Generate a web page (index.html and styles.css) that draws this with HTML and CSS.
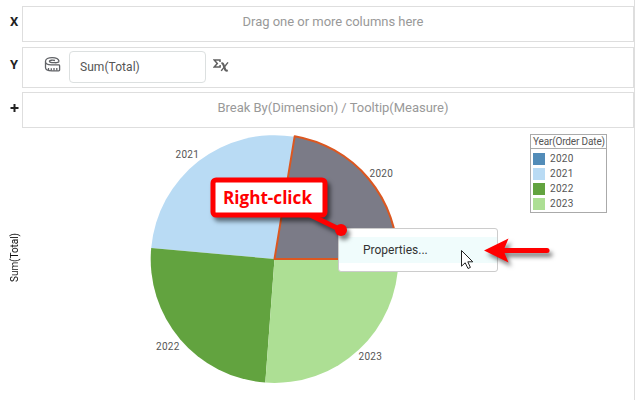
FILE: index.html
```html
<!DOCTYPE html>
<html lang="en">
<head>
<meta charset="utf-8">
<title>Chart editor</title>
<link rel="stylesheet" href="styles.css">
</head>
<body>
<main class="editor">
  <section class="shelves">
    <div class="shelf"><span class="axis">X</span><div class="drop"><span class="hint">Drag one or more columns here</span></div></div>
    <div class="shelf shelf-y"><span class="axis">Y</span><div class="drop fields">
      <svg class="measure" width="17" height="17" viewBox="0 0 17 17" aria-hidden="true">
        <path d="M15 5.2C14.5 2.8 12 1.6 8.2 1.6C4.3 1.6 1.5 3 1.5 5.2V11.5C1.5 13.8 4 14.8 8 14.8H14.8Q15.6 14.8 15.6 14V9.7Q15.6 8.9 14.8 8.9H7C3.5 8.9 1.5 7.6 1.5 5.4M15 5.2C15 6.4 13 6.9 10.5 6.7C7 6.8 5.2 6.1 5.4 5.1C5.6 4.3 8.5 3.8 11 4.5"/>
        <path d="M4.5 12V14.4M7.3 12.3V14.5M10 12V14.5M12.8 12V14.5"/>
      </svg>
      <div class="field">Sum(Total)</div>
      <svg class="aggregate" width="17" height="17" viewBox="0 0 17 17" aria-hidden="true">
        <path d="M7 4V1.9H1.2L4.3 5.4L1.2 9.1H7.1V7"/>
        <path class="thick" d="M8.4 5.6Q9.8 4.9 10.4 6.6L12.2 11.6Q12.8 13.2 14.8 12.4"/><path d="M15 4.4L8.2 12.9"/>
      </svg>
    </div></div>
    <div class="shelf"><span class="axis plus"><svg width="10" height="10" aria-hidden="true"><path d="M4.5 1V9M.5 5H8.5"/></svg></span><div class="drop"><span class="hint">Break By(Dimension) / Tooltip(Measure)</span></div></div>
  </section>
  <section class="chart">
    <div class="axis-title"><span>Sum(Total)</span></div>
    <svg class="pie" width="370" height="272" viewBox="80 128 370 272">
      <path fill="#b9dbf4" d="M274.5 259L151.2 248A123.8 123.8 0 0 1 294.7 136.8Z"/>
      <path fill="#62a33f" d="M274.5 259L265.3 382.6A123.8 123.8 0 0 1 151.2 248Z"/>
      <path fill="#addf94" d="M274.5 259H398.3A123.8 123.8 0 0 1 265.3 382.6Z"/>
      <path class="selected" d="M274.5 259L294.7 136.2A123.8 123.8 0 0 1 397.5 259Z"/>
      <g class="labels"><text x="369.5" y="176.5">2020</text><text x="175.5" y="157.5">2021</text><text x="156" y="349.5">2022</text><text x="358.5" y="360">2023</text></g>
    </svg>
    <aside class="legend">
      <div class="legend-title">Year(Order Date)</div>
      <ul>
        <li><i class="swatch y2020"></i>2020</li>
        <li><i class="swatch y2021"></i>2021</li>
        <li><i class="swatch y2022"></i>2022</li>
        <li><i class="swatch y2023"></i>2023</li>
      </ul>
    </aside>
  </section>
  <div class="menu"><div class="menu-item">Properties...</div></div>
  <svg class="annotations" width="635" height="400" viewBox="0 0 635 400">
    <g class="raised">
      <path class="leader" d="M304 212L341 230"/>
      <circle cx="341" cy="230" r="6" fill="#f00"/>
      <rect class="callout" x="213" y="180" width="112" height="35" rx="3"/>
    </g>
    <text class="callout-text" x="223" y="204" textLength="89" lengthAdjust="spacingAndGlyphs">Right-click</text>
    <g class="raised">
      <path class="arrow-line" d="M504 250.5H547"/>
      <path fill="#f00" d="M484 250.5L508.5 238.5L503.5 250.5L508.5 262.5Z"/>
    </g>
    <path class="cursor" d="M461.5 250.5V266.2L465.2 262.8L468 268.5L470.4 267.4L467.8 261.8H472.8Z"/>
  </svg>
</main>
</body>
</html>
```
FILE: styles.css
```css
* { box-sizing: border-box; }
body { margin: 0; background: #fff; font-family: Roboto, sans-serif; }
.editor { position: relative; width: 635px; height: 400px; padding-top: 6px; overflow: hidden; border-right: 1px solid #dedede; }
.shelves { display: grid; grid-template-rows: 36px 40px 36px; row-gap: 5px; }
.shelf { display: grid; grid-template-columns: 22px 612px; }
.shelf-y { margin-bottom: -1px; }
.axis { padding: 7px 0 0 10px; color: #222; font-size: 13px; line-height: 17px; font-weight: 700; }
.shelf-y .axis { padding-top: 9px; }
.axis.plus { padding-top: 11px; line-height: 0; }
.plus path { stroke: #222; stroke-width: 2; }
.drop { border: 1px solid #dedede; display: flex; justify-content: center; align-items: flex-start; }
.hint { color: #999; font-size: 13px; line-height: 17px; padding-top: 6px; margin-left: 10px; white-space: nowrap; letter-spacing: -.02px; }
.drop.fields { justify-content: flex-start; padding: 3px 0 0 21px; }
.measure { margin-top: 5px; fill: none; stroke: #606266; stroke-width: 1.3; }
.field { width: 137px; height: 32px; margin-left: 8px; padding-left: 10px; border: 1px solid #dce0e0; border-radius: 4px; color: #555; font-size: 12px; line-height: 30px; letter-spacing: .05px; }
.aggregate { margin: 7px 0 0 7px; fill: none; stroke: #606060; stroke-width: 1.5; }
.aggregate .thick { stroke-width: 2.1; }
.chart { display: flex; align-items: flex-start; height: 272px; }
.axis-title { width: 80px; height: 272px; padding: 105px 0 0 8px; font-size: 10px; line-height: 14px; color: #111; }
.axis-title span { writing-mode: vertical-rl; transform: rotate(180deg); display: block; letter-spacing: -.05px; }
.selected { fill: #7b7b87; stroke: #dc5720; stroke-width: 2; stroke-linejoin: round; }
.labels { font-size: 10px; fill: #555; letter-spacing: .3px; }
.legend { width: 77px; height: 79px; margin: 6px 0 0 80px; border: 1px solid #aaa; color: #555; }
.legend-title { height: 14px; padding-left: 2px; border-bottom: 1px solid #aaa; font-size: 10px; line-height: 14px; letter-spacing: -.15px; white-space: nowrap; }
.legend ul { list-style: none; margin: 0; padding: 2px 2px 0; }
.legend li { display: flex; align-items: center; height: 15px; font-size: 10px; line-height: 15px; letter-spacing: .3px; }
.swatch { width: 12px; height: 12px; margin-right: 5px; }
.y2020 { background: #528cb8; }
.y2021 { background: #b9dbf4; }
.y2022 { background: #62a33f; }
.y2023 { background: #addf94; }
.menu { position: absolute; left: 338px; top: 228px; width: 160px; height: 44px; padding: 8px 0; border: 1px solid #ccc; border-radius: 3px; background: #fff; }
.menu-item { height: 26px; padding-left: 24px; background: #f0fcfc; color: #333; font-size: 12px; line-height: 26px; letter-spacing: 0; }
.annotations { position: absolute; left: 0; top: 0; }
.raised { filter: drop-shadow(3px 4px 2px rgba(0, 0, 0, .5)); }
.callout { fill: #fff; stroke: #f00; stroke-width: 5; }
.leader { stroke: #f00; stroke-width: 5; }
.callout-text { font: 700 18px "Open Sans", sans-serif; fill: #f00; }
.arrow-line { stroke: #f00; stroke-width: 5; stroke-linecap: round; }
.cursor { fill: #fff; stroke: #222; stroke-width: 1; }
```
